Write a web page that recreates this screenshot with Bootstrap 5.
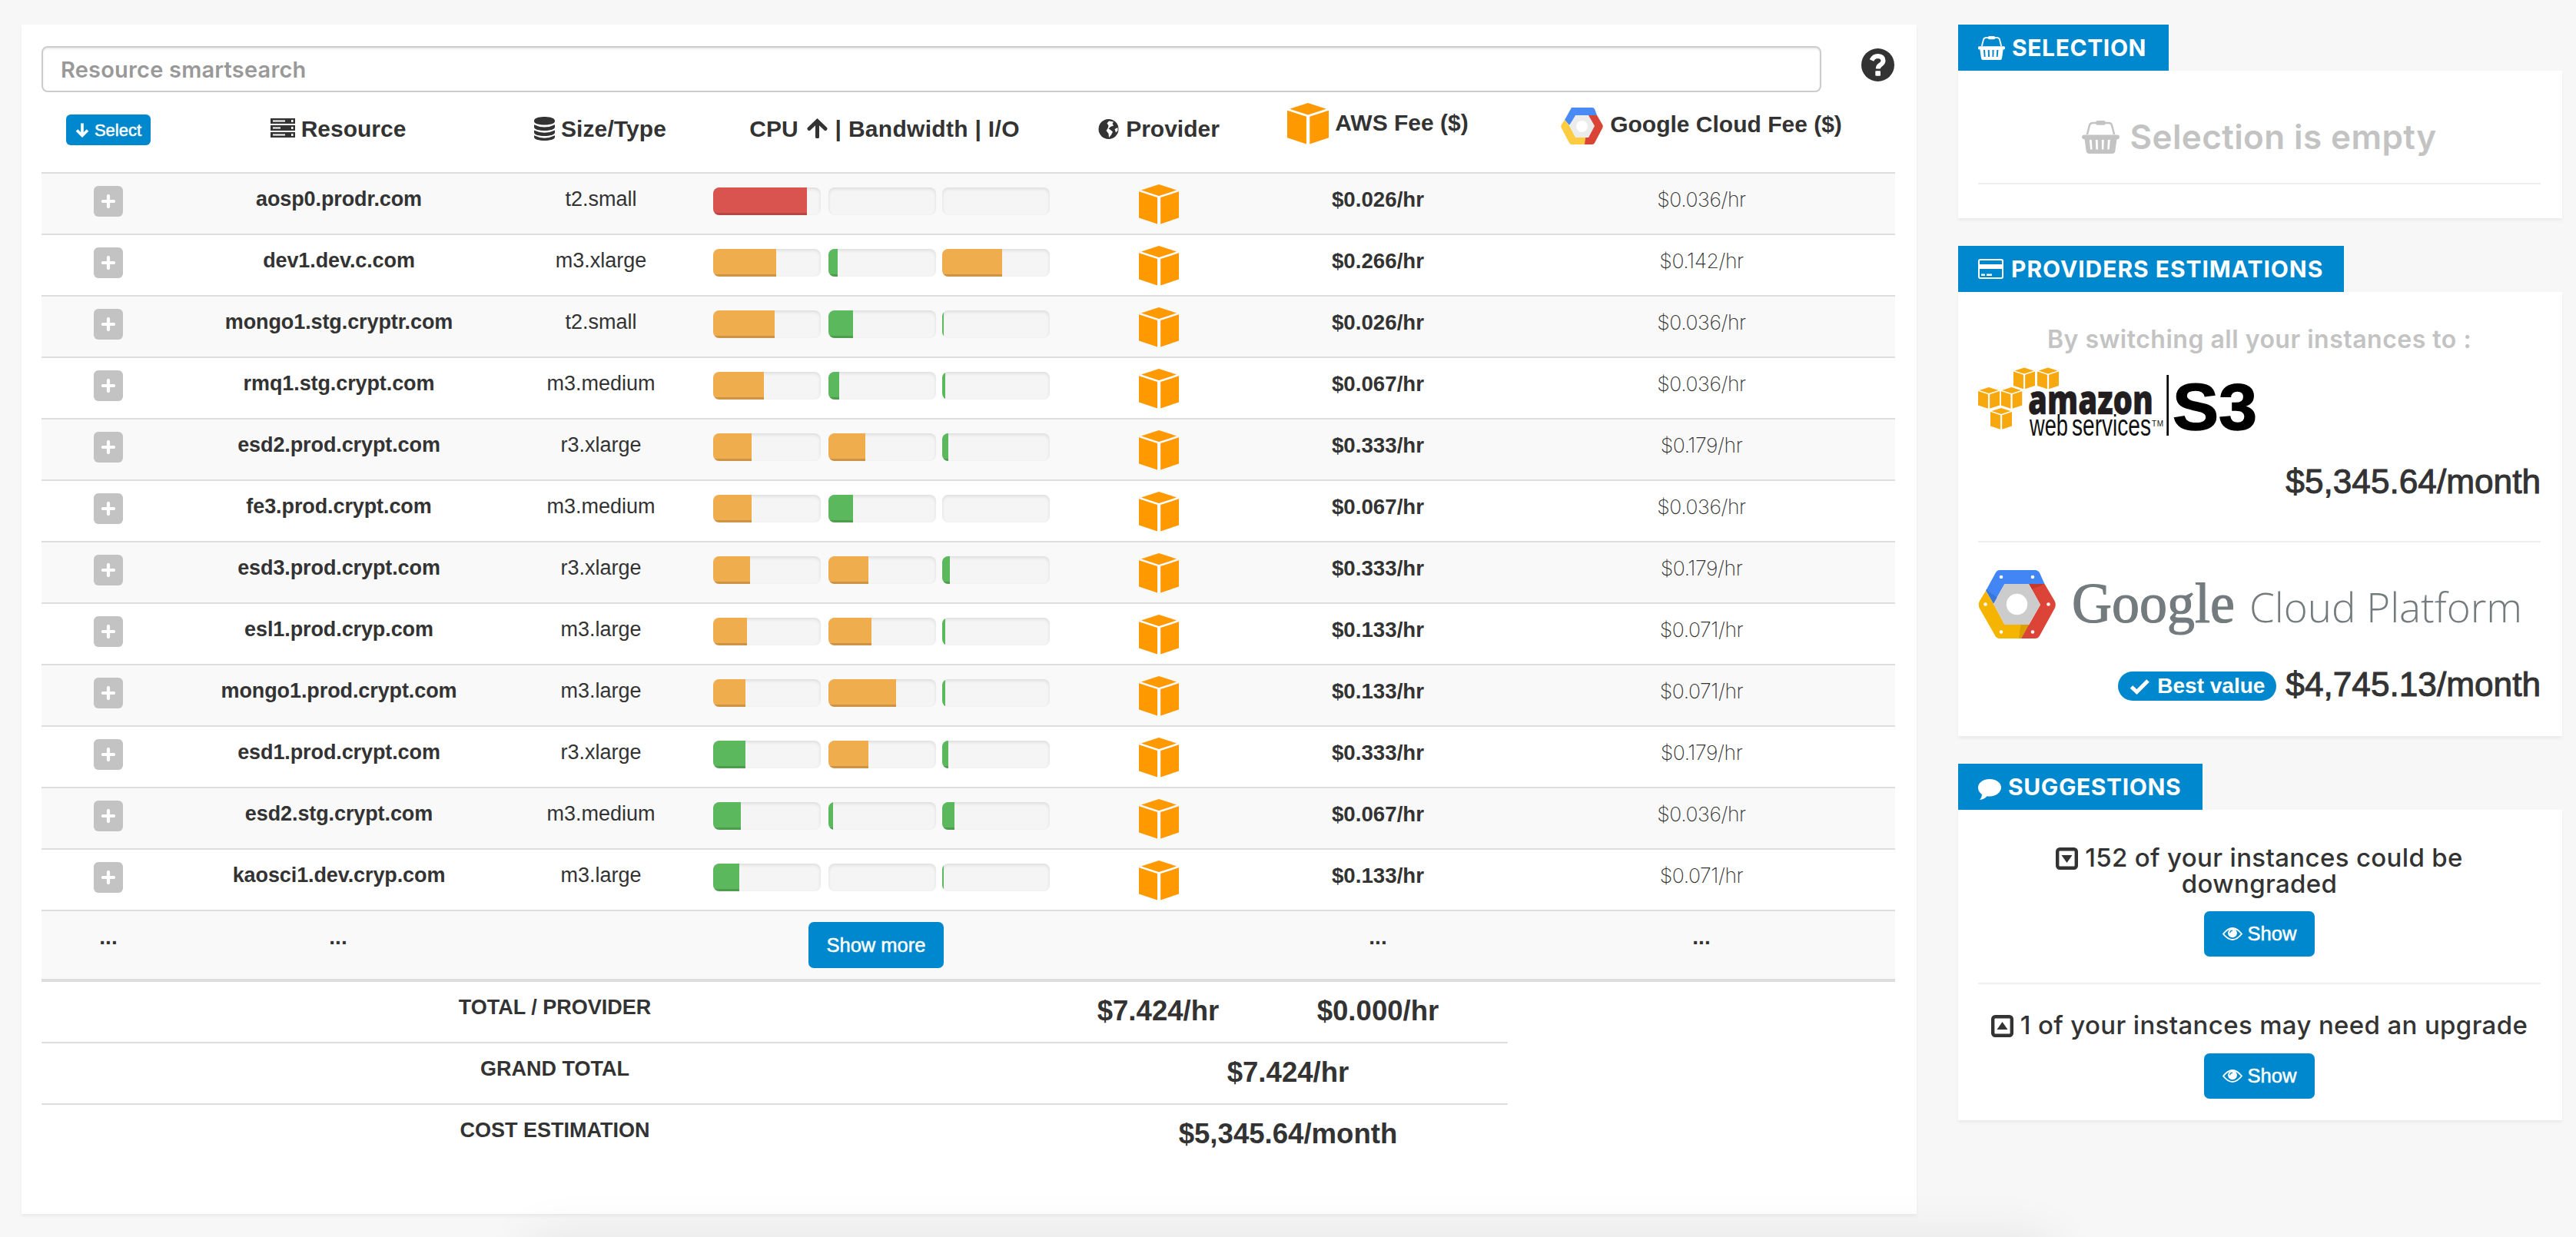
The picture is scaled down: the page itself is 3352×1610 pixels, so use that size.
<!DOCTYPE html>
<html lang="en">
<head>
<meta charset="utf-8">
<title>Cloud cost comparison</title>
<link rel="stylesheet" href="https://cdn.jsdelivr.net/npm/bootstrap@5.3.0/dist/css/bootstrap.min.css">
<script src="https://cdn.jsdelivr.net/npm/bootstrap@5.3.0/dist/js/bootstrap.bundle.min.js"></script>
<style>
:root{--brand:#0088ce;--ink:#333;--line:#ddd;--soft:#c3c3c3;--helv:"Liberation Sans",Arial,sans-serif;--geo:Inter,"Open Sans",sans-serif}
body{background:#f7f7f7;color:var(--ink);font-family:var(--helv);font-size:27px;line-height:35px;height:1610px;overflow:hidden}
svg{display:block;flex:none}
.page{padding:32px 18px 0 28px;gap:54px}
.panel{background:#fff;box-shadow:0 3px 4px rgba(0,0,0,.05)}
.main-panel{width:2466px;height:1548px;padding:28px 28px 0 26px}
.side{width:786px}
.smart{width:2316px;height:60px;border:2px solid #ccc;border-radius:8px;padding:0 23px;font:600 29px/56px var(--geo);letter-spacing:.2px;box-shadow:inset 0 2px 2px rgba(0,0,0,.075)}
.smart::placeholder{color:#999;opacity:1}
.help{margin:3px 1px 0 0}
.grid-table{width:2412px;table-layout:fixed;border-collapse:separate;border-spacing:0;text-align:center}
.grid-table th,.grid-table td{padding:16px 16px 0;vertical-align:top}
.grid-table thead th{height:104px;padding:26px 0 0;font-size:30px;line-height:43px}
.grid-table tbody td,.grid-table tfoot td{border-top:2px solid var(--line);height:80px}
.grid-table tbody tr:nth-child(odd) td{background:#f9f9f9}
.grid-table .more-row td{height:90px;font-weight:700;font-size:28px}
.grid-table tfoot tr:first-child td{border-top-width:4px;height:82px}
.grid-table tfoot td.blank{border-top-color:transparent}
.grid-table tfoot tr:first-child td.blank{border-top-color:var(--line)}
.hd{display:flex;justify-content:center;align-items:flex-start}
.btn-b{--bs-btn-bg:var(--brand);--bs-btn-color:#fff;--bs-btn-border-color:var(--brand);--bs-btn-hover-bg:#0077b5;--bs-btn-hover-color:#fff;border:0;padding:0;border-radius:7px;font-family:var(--helv);font-size:25.5px;display:inline-flex;align-items:center;justify-content:center;-webkit-text-stroke:.5px #fff}
.btn-sel{width:110px;height:40px;font-size:22px;gap:7px;border-radius:6px;margin-top:-2px}
.btn-more{width:176px;height:60px;margin:-2px 0 0 4px}
.btn-show{width:144px;height:59px;gap:7px}
.btn-plus{width:38px;height:40px;border-radius:6px;background:var(--soft);display:inline-flex;align-items:center;justify-content:center}
.name{font-weight:700;letter-spacing:-.1px}
.grid-table td.name{padding-left:18px}
.fee{font-weight:700;font-size:27.7px}
.thin{font-family:Inter,sans-serif;font-weight:200;font-size:26.5px;letter-spacing:-.4px}
.meters{padding-top:2px}
.meters .progress{width:140px;height:36px;border-radius:8px;background:#f5f5f5;box-shadow:inset 0 2px 4px rgba(0,0,0,.1);margin-right:10px}
.meters .progress+.progress{margin-right:8px}
.meters .progress-bar{box-shadow:inset 0 -3px 0 rgba(0,0,0,.15)}
.lv-r{background:#d9534f}.lv-o{background:#f0ad4e}.lv-g{background:#5cb85c}
.sum-l{font-weight:700}
.sum-v{font-weight:700;font-size:36.6px;line-height:43px}
.tab-t{background:var(--brand);color:#fff;height:60px;display:inline-flex;align-items:center;padding:0 0 0 26px;font:700 30px/60px var(--geo);letter-spacing:.6px;vertical-align:top}
.side-body{padding:0 28px 0 26px;text-align:center}
.rule{height:2px;background:#eee}
.soft{color:var(--soft)}
.geo{font-family:var(--geo);font-weight:600}
.price{font-size:44.2px;line-height:50px;-webkit-text-stroke:1px var(--ink)}
.best{background:var(--brand);color:#fff;border-radius:19px;height:38px;width:206px;margin:4px 12px 0 0;display:inline-flex;align-items:center;justify-content:center;gap:9px;font-weight:700;font-size:28px;-webkit-text-stroke:0}
.sug{font:500 33px/34px var(--geo);letter-spacing:.35px}
.dock-shade{position:fixed;left:700px;width:1960px;top:1625px;height:60px;box-shadow:0 0 70px 10px rgba(0,0,0,.09)}
</style>
</head>
<body>
<svg width="0" height="0" class="position-absolute">
<symbol id="cube" viewBox="0 0 52 52"><path fill="currentColor" d="M26 0 49 7.5 26 15 3 7.5ZM0 9.3 24 17V51.5L0 43.5ZM52 9.3 28.2 17V51.5L52 43.5Z"/></symbol>
<symbol id="basket" viewBox="0 0 35 31"><path fill="none" stroke="currentColor" stroke-width="1.8" d="M4.800 13 7 4.500Q7.600 2.200 10 2.200H25Q27.400 2.200 28 4.500L30.200 13"/><rect x="13" width="9" height="4.200" rx="1.500" fill="currentColor"/><path fill="currentColor" fill-rule="evenodd" d="M2 13.300H33a2 2 0 0 1 0 4.200H32.600L31 29a2.500 2.500 0 0 1-2.300 2H6.300A2.500 2.500 0 0 1 4 29L2.400 17.500H2a2 2 0 0 1 0-4.200ZM7 18 7.800 27H9.600L9 18ZM12.700 18 13.100 27H15L14.700 18ZM18.500 18V27H20.300L20.600 18ZM24.300 18 23.800 27H25.600L26.400 18Z"/></symbol>
<symbol id="eye" viewBox="0 0 26 17"><path fill="none" stroke="currentColor" stroke-width="1.900" d="M1 8.500Q13-6.500 25 8.500Q13 23.500 1 8.500Z"/><circle cx="13" cy="7.300" r="5.900" fill="currentColor"/><path d="M9.800 7.300A3.200 3.200 0 0 1 13 4.100" stroke="#0088ce" stroke-width="1.300" fill="none"/></symbol>
<symbol id="plus" viewBox="0 0 18 18"><path d="M9 2V16M2 9H16" stroke="#fff" stroke-width="4.200" stroke-linecap="round"/></symbol>
<symbol id="hexs" viewBox="0 0 55 48"><path fill="#4a8af4" d="M14 0H41Q43 0 44 2L47 10H20L11 23 5 16Z"/><path fill="#fdcc41" d="M5 16 11 23 20 39H35L31 48H14Q12 48 11 46L1 27Q-.5 24 1 22Z"/><path fill="#d94436" d="M36 10H47L54 22Q55.500 24 54 27L44 46Q43 48 41 48H31Z"/><path fill="#ececec" d="M19 10H36L44 24 36 39H19L11 24Z"/><circle cx="27.500" cy="24.500" r="7.500" fill="#fff"/></symbol>
</svg>
<div class="page d-flex align-items-start">
<main class="panel main-panel">
  <div class="d-flex justify-content-between align-items-start">
    <input class="smart bg-white" type="text" placeholder="Resource smartsearch">
    <svg class="help" width="43" height="43" viewBox="0 0 43 43"><circle cx="21.500" cy="21.500" r="21.500" fill="#333"/><path d="M13.500 15.500Q16 10 21.500 10Q28.500 10.500 28.500 16Q28.500 19 25 21.300Q21.800 23.200 21.800 26.500" fill="none" stroke="#fff" stroke-width="6"/><rect x="18.300" y="29.300" width="6.700" height="6.500" rx="1" fill="#fff"/></svg>
  </div>
  <table class="grid-table">
    <colgroup><col style="width:174px"><col style="width:424px"><col style="width:260px"><col style="width:478px"><col style="width:234px"><col style="width:338px"><col style="width:504px"></colgroup>
    <thead><tr>
      <th><button class="btn btn-b btn-sel"><svg width="18" height="20" viewBox="0 0 18 20"><path d="M9 1.500V17M2 10.500 9 17.500 16 10.500" fill="none" stroke="#fff" stroke-width="3.600"/></svg><span>Select</span></button></th>
      <th><div class="hd"><svg class="me-2" style="margin-top:8px" width="32" height="25" viewBox="0 0 32 25"><path fill="#333" fill-rule="evenodd" d="M0 0H32V7H0ZM0 9H32V16H0ZM0 18H32V25H0ZM3 2.500V4.500H19V2.500ZM3 11.500V13.500H13V11.500ZM3 20.500V22.500H19V20.500ZM27 2H29.500V5H27ZM27 11H29.500V14H27ZM27 20H29.500V23H27Z"/></svg><span>Resource</span></div></th>
      <th><div class="hd"><svg style="margin:6px 8px 0 0" width="27" height="31" viewBox="0 0 27 31"><path fill="#333" d="M0 5C0-1.700 27-1.700 27 5V6C27 12 0 12 0 6ZM0 10.200Q13.500 17 27 10.200V13.500C27 19.500 0 19.500 0 13.500ZM0 17.400Q13.500 24 27 17.400V20.500C27 26.500 0 26.500 0 20.500ZM0 24.300Q13.500 31 27 24.300V26.500C27 32.500 0 32.500 0 26.500Z"/></svg><span style="margin-right:2px;letter-spacing:.1px">Size/Type</span></div></th>
      <th><div class="hd"><span>CPU</span><svg style="margin:8px 10px 0 11px" width="27" height="26" viewBox="0 0 27 26"><path d="M13.500 24V4M3 13.500 13.500 3.500 24 13.500" fill="none" stroke="#333" stroke-width="5" stroke-linecap="round"/></svg><span style="letter-spacing:.3px">| Bandwidth | I/O</span></div></th>
      <th><div class="hd"><svg style="margin:9px 9px 0 0" width="27" height="26" viewBox="0 0 27 26"><circle cx="13.500" cy="13" r="13" fill="#333"/><path fill="#fff" d="M14 2.500 20 3.500 18.500 6 20 8.500 16 10 13.500 12.500 16 14 19 16.500 17 20.500 14 24 13.500 19 10.500 15 12.500 12 13.500 8.500 11.500 5.500ZM21.500 13 25.500 11V15L23 17.500Z"/></svg><span style="margin-right:-2px">Provider</span></div></th>
      <th><div class="hd"><svg style="margin:-12px 8px 0 0;color:#f90" width="54" height="54"><use href="#cube"/></svg><span style="margin-top:-8px">AWS Fee ($)</span></div></th>
      <th><div class="hd"><svg style="margin:-6px 9px 0 0" width="55" height="48"><use href="#hexs"/></svg><span style="margin-top:-6px">Google Cloud Fee ($)</span></div></th>
    </tr></thead>
    <tbody id="rows"></tbody>
    <tfoot>
      <tr><td colspan="4"><span class="sum-l">TOTAL / PROVIDER</span></td><td class="sum-v">$7.424/hr</td><td class="sum-v">$0.000/hr</td><td class="blank"></td></tr>
      <tr><td colspan="4"><span class="sum-l">GRAND TOTAL</span></td><td colspan="2" class="sum-v">$7.424/hr</td><td class="blank"></td></tr>
      <tr><td colspan="4"><span class="sum-l">COST ESTIMATION</span></td><td colspan="2" class="sum-v">$5,345.64/month</td><td class="blank"></td></tr>
    </tfoot>
  </table>
</main>
<aside class="side">
  <section style="margin-bottom:36px">
    <div class="tab-t" style="width:274px"><svg style="margin-right:9px" width="35" height="31"><use href="#basket"/></svg><span>SELECTION</span></div>
    <div class="panel side-body" style="height:192px;padding-top:54px">
      <div class="soft geo d-flex justify-content-center align-items-center" style="font-size:44px;line-height:64px;letter-spacing:.4px;margin-bottom:28px"><svg style="margin-right:13px" width="49" height="43"><use href="#basket"/></svg><span>Selection is empty</span></div>
      <div class="rule"></div>
    </div>
  </section>
  <section style="margin-bottom:36px">
    <div class="tab-t" style="width:502px;letter-spacing:.95px"><svg style="margin-right:10px" width="33" height="26" viewBox="0 0 33 26"><rect x="1" y="1" width="31" height="24" rx="2" fill="none" stroke="#fff" stroke-width="2"/><path d="M1 7H32V13H1ZM4 19.500H9V22H4ZM11 19.500H18V22H11Z" fill="#fff"/></svg><span>PROVIDERS ESTIMATIONS</span></div>
    <div class="panel side-body" style="height:578px;padding-top:42px">
      <div class="soft geo" style="font-size:32px;line-height:40px;letter-spacing:.5px">By switching all your instances to :</div>
      <svg style="margin-top:8px;color:#f8a80f" width="386" height="110" viewBox="14 0 386 110">
        <use href="#cube" x="60" y="7.500" width="28" height="30"/><use href="#cube" x="91" y="7.500" width="28" height="30"/><use href="#cube" x="14" y="33" width="28" height="30"/><use href="#cube" x="43.500" y="33" width="28" height="30"/><use href="#cube" x="30" y="60" width="28" height="30"/>
        <text x="79" y="69" font-family="Open Sans" font-weight="800" font-size="53" fill="#221e1f" stroke="#221e1f" stroke-width=".6" textLength="163" lengthAdjust="spacingAndGlyphs">amazon</text>
        <text x="81" y="97" font-family="Liberation Sans" font-size="38" fill="#111" textLength="50" lengthAdjust="spacingAndGlyphs">web</text>
        <text x="136" y="97" font-family="Liberation Sans" font-size="38" fill="#111" textLength="103" lengthAdjust="spacingAndGlyphs">services</text>
        <text x="240" y="85" font-family="Liberation Sans" font-size="10" fill="#111" textLength="15">TM</text>
        <rect x="259.300" y="18" width="2.700" height="79" fill="#000"/>
        <text x="267" y="89" font-family="Liberation Sans" font-weight="700" font-size="86" fill="#000" stroke="#000" stroke-width="1.5" textLength="110" lengthAdjust="spacingAndGlyphs">S3</text>
      </svg>
      <div class="price text-end" style="margin-top:22px">$5,345.64/month</div>
      <div class="rule" style="margin-top:52px"></div>
      <svg style="margin-top:24px" width="732" height="115" viewBox="14 0 732 115">
        <path fill="#4285f4" d="M42 12H88Q92 12 94 15.500L100.500 30H48.500L34 55.500 24 39 36.500 16Q38.500 12 42 12Z"/><path fill="#3a75d8" d="M24 37 39 48 34 56Z"/>
        <path fill="#f4b400" d="M24 39 34 56 48.500 83H80L70 101H42Q38.500 101 36.500 98L16 62Q13.500 57 16 52Z"/><path fill="#dba000" d="M69.500 83H81L70 101H67Z"/>
        <path fill="#db4437" d="M80 30H100.500L113.500 52Q116 57 113.500 62L94 97.500Q92 101 88 101H70L95 57Z"/><path fill="#c53929" d="M80 30H100.500L84 37Z"/>
        <path fill="#ccc" d="M48.500 30H80L95 57 80 83H48.500L34 56Z"/><circle cx="64.500" cy="56.500" r="13.700" fill="#fff"/>
        <g fill="#fff"><circle cx="44" cy="21" r="2.300"/><circle cx="85" cy="21" r="2.300"/><circle cx="23.500" cy="56.500" r="2.300"/><circle cx="105.500" cy="56.500" r="2.300"/><circle cx="44" cy="92.500" r="2.300"/><circle cx="85" cy="92.500" r="2.300"/></g>
        <text x="136" y="80" font-family="Liberation Serif" font-size="74" fill="#737b7e" stroke="#737b7e" stroke-width="1.2" textLength="212" lengthAdjust="spacingAndGlyphs">Google</text>
        <text x="367" y="80" font-family="Open Sans" font-weight="300" font-size="54" fill="#737b7e" textLength="355" lengthAdjust="spacingAndGlyphs">Cloud Platform</text>
      </svg>
      <div class="price d-flex justify-content-end align-items-center" style="margin-top:21px"><span class="best"><svg width="27" height="21" viewBox="0 0 27 21"><path d="M2.500 11 9.500 17.500 24 3" fill="none" stroke="#fff" stroke-width="5"/></svg><span>Best value</span></span><span>$4,745.13/month</span></div>
    </div>
  </section>
  <section>
    <div class="tab-t" style="width:318px"><svg style="margin:6px 9px 0 0" width="30" height="27" viewBox="0 0 30 27"><path fill="#fff" d="M15 0C23.500 0 30 5 30 11S23.500 22.500 15 22.500Q13 22.500 11.500 22.200Q8 26.500 2 27Q5 24 5 20Q0 16.500 0 11C0 5 6.500 0 15 0Z"/></svg><span>SUGGESTIONS</span></div>
    <div class="panel side-body" style="height:404px;padding-top:45px">
      <div class="sug"><svg class="d-inline-block" style="margin:-3px 9px 0 0" width="29" height="29" viewBox="0 0 29 29"><rect x="2.200" y="2.200" width="24.600" height="24.600" rx="3" fill="none" stroke="#333" stroke-width="4.400"/><path d="M7.500 10H21.500L14.500 20Z" fill="#333"/></svg>152 of your instances could be<br>downgraded</div>
      <button class="btn btn-b btn-show" style="margin-top:19px"><svg width="26" height="17"><use href="#eye"/></svg><span>Show</span></button>
      <div class="rule" style="margin-top:34px"></div>
      <div class="sug" style="margin:36px -10px 0"><svg class="d-inline-block" style="margin:-3px 9px 0 0" width="29" height="29" viewBox="0 0 29 29"><rect x="2.200" y="2.200" width="24.600" height="24.600" rx="3" fill="none" stroke="#333" stroke-width="4.400"/><path d="M7.500 19H21.500L14.500 9Z" fill="#333"/></svg>1 of your instances may need an upgrade</div>
      <button class="btn btn-b btn-show" style="margin-top:20px"><svg width="26" height="17"><use href="#eye"/></svg><span>Show</span></button>
    </div>
  </section>
</aside>
</div>
<div class="dock-shade"></div>
<script>
const rows=[
["aosp0.prodr.com","t2.small","r122","","","0.026","0.036"],
["dev1.dev.c.com","m3.xlarge","o82","g12","o78","0.266","0.142"],
["mongo1.stg.cryptr.com","t2.small","o80","g32","g2","0.026","0.036"],
["rmq1.stg.crypt.com","m3.medium","o66","g14","g4","0.067","0.036"],
["esd2.prod.crypt.com","r3.xlarge","o50","o48","g8","0.333","0.179"],
["fe3.prod.crypt.com","m3.medium","o50","g32","","0.067","0.036"],
["esd3.prod.crypt.com","r3.xlarge","o48","o52","g10","0.333","0.179"],
["esl1.prod.cryp.com","m3.large","o44","o56","g4","0.133","0.071"],
["mongo1.prod.crypt.com","m3.large","o42","o88","g4","0.133","0.071"],
["esd1.prod.crypt.com","r3.xlarge","g42","o52","g8","0.333","0.179"],
["esd2.stg.crypt.com","m3.medium","g36","g6","g16","0.067","0.036"],
["kaosci1.dev.cryp.com","m3.large","g34","","g2","0.133","0.071"]];
const meter=v=>`<div class="progress">${v?`<div class="progress-bar lv-${v[0]}" style="width:${v.slice(1)}px"></div>`:''}</div>`;
document.getElementById('rows').innerHTML=rows.map(r=>`<tr><td><span class="btn-plus"><svg width="18" height="18"><use href="#plus"/></svg></span></td><td class="name">${r[0]}</td><td>${r[1]}</td><td><div class="meters d-flex">${meter(r[2])}${meter(r[3])}${meter(r[4])}</div></td><td style="padding:14px 15px 0 17px"><svg class="mx-auto" style="color:#f90" width="52" height="52"><use href="#cube"/></svg></td><td class="fee">$${r[5]}/hr</td><td class="thin">$${r[6]}/hr</td></tr>`).join('')+
`<tr class="more-row"><td>...</td><td>...</td><td colspan="3"><button class="btn btn-b btn-more">Show more</button></td><td>...</td><td>...</td></tr>`;
</script>
</body>
</html>
